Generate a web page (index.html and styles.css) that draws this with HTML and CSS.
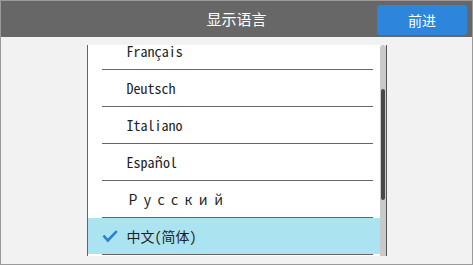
FILE: index.html
```html
<!DOCTYPE html>
<html lang="zh-CN">
<head>
  <meta charset="UTF-8" />
  <meta name="viewport" content="width=device-width, initial-scale=1.0" />
  <title>显示语言</title>
  <link rel="stylesheet" href="styles.css">
</head>
<body>
  <div class="screen">
    <header class="top-bar">
      <span></span>
      <h1 class="title">显示语言</h1>
      <button class="next-btn" type="button">前进</button>
    </header>
    <main class="content">
      <div class="lang-panel">
        <ul class="lang-list">
          <li><div class="row"><span class="label" lang="fr">Français</span></div></li>
          <li><div class="row"><span class="label" lang="de">Deutsch</span></div></li>
          <li><div class="row"><span class="label" lang="it">Italiano</span></div></li>
          <li><div class="row"><span class="label" lang="es">Español</span></div></li>
          <li><div class="row"><span class="label wide" lang="ru">Русский</span></div></li>
          <li class="selected">
            <div class="row">
              <svg class="check" viewBox="0 0 16 13" width="16" height="13">
                <path d="M1.5 5.5 L5.8 10.5 L14.8 1.2" fill="none" stroke="currentColor" stroke-width="2.6"></path>
              </svg>
              <span class="label">中文(简体)</span>
            </div>
          </li>
        </ul>
        <div class="scroll-track">
          <div class="scroll-thumb"></div>
        </div>
      </div>
    </main>
  </div>
</body>
</html>
```
FILE: styles.css
```css
* {
  box-sizing: border-box;
}
body {
  margin: 0;
  font-family: "Noto Sans CJK SC", "Noto Sans", sans-serif;
}
.screen {
  width: 473px;
  height: 265px;
  border: 1px solid #9a9a9a;
  background-color: #f2f2f2;
  display: flex;
  flex-direction: column;
  overflow: hidden;
}
.top-bar {
  height: 36px;
  flex-shrink: 0;
  background-color: #676767;
  display: grid;
  grid-template-columns: 1fr auto 1fr;
  align-items: center;
}
.title {
  margin: 0;
  font-size: 15px;
  font-weight: normal;
  color: #ffffff;
  line-height: 36px;
}
.next-btn {
  justify-self: end;
  width: 90px;
  height: 30px;
  margin: 1px 5px 0 0;
  border: none;
  border-radius: 3px;
  background-color: #2d85dc;
  color: #ffffff;
  font-family: inherit;
  font-size: 14px;
  padding: 0;
  cursor: pointer;
}
.content {
  flex: 1;
  display: flex;
  justify-content: center;
  padding-top: 8px;
}
.lang-panel {
  width: 300px;
  height: 211px;
  display: flex;
  background-color: #ffffff;
  border-left: 1px solid #666666;
  border-right: 1px solid #555555;
  overflow: hidden;
}
.lang-list {
  flex: 1;
  list-style: none;
  margin: -12px 0 0 0;
  padding: 0;
}
.lang-list li::after {
  content: "";
  display: block;
  height: 1px;
  margin: 0 7px 0 14px;
  background-color: #666666;
}
.row {
  height: 36px;
  display: flex;
  align-items: center;
  padding-left: 39px;
  position: relative;
  color: #1e1e1e;
}
.label {
  font-size: 14px;
  line-height: 36px;
  font-feature-settings: "hwid";
}
.label.wide {
  font-feature-settings: normal;
  letter-spacing: 6.5px;
  padding-left: 2px;
}
.selected .row {
  background-color: #ace3f1;
}
.check {
  position: absolute;
  left: 14px;
  top: 12px;
  color: #2a7fd6;
}
.scroll-track {
  width: 6px;
  height: 211px;
  background-color: #c9c9c9;
  border-radius: 3px 3px 0 0;
  padding-top: 44px;
  flex-shrink: 0;
}
.scroll-thumb {
  width: 4px;
  height: 111px;
  margin-left: 1px;
  background-color: #474747;
  border-radius: 2px;
}
```
